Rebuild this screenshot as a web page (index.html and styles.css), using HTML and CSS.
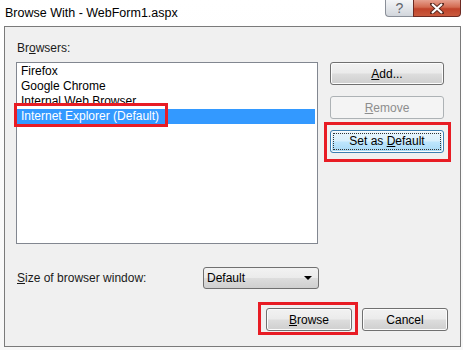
FILE: index.html
```html
<!DOCTYPE html>
<html lang="en">
<head>
    <meta charset="UTF-8">
    <title>Browse With - WebForm1.aspx</title>
    <link rel="stylesheet" href="styles.css">
</head>
<body>

<div class="window">
    <div class="titlebar">
        <span class="title">Browse With - WebForm1.aspx</span>
        <div class="caption-buttons">
            <span class="cap help">?</span>
            <span class="cap close">
                <svg width="14" height="11" viewBox="0 0 14 11">
                    <path d="M2 1 L12 10 M12 1 L2 10" stroke="#5a2a20" stroke-width="4" stroke-linecap="square"/>
                    <path d="M2 1 L12 10 M12 1 L2 10" stroke="#ffffff" stroke-width="2.2"/>
                </svg>
            </span>
        </div>
    </div>

    <div class="client">
        <div class="main">
            <div class="left">
                <div class="label">Br<u>o</u>wsers:</div>
                <div class="listbox">
                    <div class="item">Firefox</div>
                    <div class="item">Google Chrome</div>
                    <div class="item">Internal Web Browser</div>
                    <div class="item selected"><span class="marked">Internet Explorer (Default)</span></div>
                </div>
            </div>
            <div class="side">
                <button class="btn"><u>A</u>dd...</button>
                <button class="btn disabled"><u>R</u>emove</button>
                <button class="btn default marked-set"><span class="focus">Set as <u>D</u>efault</span></button>
            </div>
        </div>

        <div class="size-row">
            <span class="label"><u>S</u>ize of browser window:</span>
            <div class="select">
                <span>Default</span>
                <span class="arrow"></span>
            </div>
        </div>

        <div class="footer">
            <button class="btn wide marked-browse"><u>B</u>rowse</button>
            <button class="btn wide">Cancel</button>
        </div>
    </div>
</div>

</body>
</html>
```

FILE: styles.css
```css
* {
    box-sizing: border-box;
}

body {
    margin: 0;
    font-family: "Liberation Sans", Arial, sans-serif;
    font-size: 12px;
    color: #000;
    background: linear-gradient(to bottom, #ffffff 0%, #f7f7f7 100%);
}

.window {
    width: 463px;
    height: 350px;
    overflow: hidden;
}

/* Title bar */
.titlebar {
    height: 26px;
    display: flex;
    justify-content: space-between;
    align-items: flex-start;
    padding: 0 2px 0 5px;
}

.title {
    font-size: 12.5px;
    line-height: 16px;
    margin-top: 5px;
    color: #000;
}

.caption-buttons {
    display: flex;
}

.cap {
    height: 17px;
    display: flex;
    align-items: center;
    justify-content: center;
    border: 1px solid #8a8f98;
    border-top: none;
}

.help {
    width: 28px;
    border-radius: 0 0 0 4px;
    border-right: none;
    background: linear-gradient(to bottom, #f4f5f7 0%, #e3e6ea 50%, #d2d6dc 100%);
    color: #5f646c;
    font-size: 14px;
    line-height: 15px;
}

.close {
    width: 48px;
    border-radius: 0 0 4px 0;
    border-color: #6d2a22;
    background: linear-gradient(to bottom, #e6a08f 0%, #d36a50 45%, #c0432a 55%, #c95a3e 100%);
}

/* Client area */
.client {
    margin: 0 2px 0 4px;
    height: 321px;
    background: #f0f0f0;
    border: 1px solid #7a7a7a;
    padding: 0 12px 0 11px;
    display: flex;
    flex-direction: column;
}

.main {
    display: flex;
    margin-top: 13px;
}

.left {
    width: 302px;
}

.label {
    height: 16px;
    line-height: 16px;
    margin-left: 1px;
    color: #1a1a1a;
}

.listbox {
    margin-top: 6px;
    height: 182px;
    border: 1px solid #828790;
    background: #fff;
    padding: 1px 2px 0 0;
}

.item {
    height: 15px;
    line-height: 15px;
    padding-left: 4px;
}

.selected {
    background: #3399ff;
    color: #fff;
}

.marked {
    position: relative;
}

.marked::after {
    content: "";
    position: absolute;
    left: -7px;
    right: -9px;
    top: -6px;
    bottom: -4px;
    border: 3px solid #e81c24;
}

.side {
    display: flex;
    flex-direction: column;
    margin-left: 12px;
    margin-top: 22px;
    gap: 11px;
}

/* Buttons */
.btn {
    position: relative;
    font-family: inherit;
    font-size: 12px;
    color: #000;
    width: 114px;
    height: 23px;
    padding: 0;
    border: 1px solid #707070;
    border-radius: 3px;
    background: linear-gradient(to bottom, #f2f2f2 0%, #ebebeb 48%, #dddddd 52%, #cfcfcf 100%);
    box-shadow: inset 0 0 0 1px #fcfcfc;
}

.btn.disabled {
    color: #8d8d8d;
    border-color: #adb2b5;
    background: #f4f4f4;
    box-shadow: none;
}

.btn.default {
    border-color: #3c7fb1;
    background: linear-gradient(to bottom, #eaf6fd 0%, #d9f0fc 48%, #bee6fd 52%, #a7d9f5 100%);
    padding: 2px;
}

.focus {
    display: block;
    height: 17px;
    line-height: 15px;
    border: 1px dotted #333;
}

.marked-set::after,
.marked-browse::after {
    content: "";
    position: absolute;
    border: 3px solid #e81c24;
}

.marked-set::after {
    left: -7px;
    right: -8px;
    top: -9px;
    bottom: -10px;
}

.marked-browse::after {
    left: -9px;
    right: -7px;
    top: -7px;
    bottom: -5px;
}

/* Size row */
.size-row {
    display: flex;
    align-items: center;
    margin-top: 23px;
}

.size-row .label {
    width: 186px;
}

.select {
    width: 116px;
    height: 22px;
    border: 1px solid #707070;
    border-radius: 3px;
    background: linear-gradient(to bottom, #f2f2f2 0%, #ebebeb 48%, #dddddd 52%, #cfcfcf 100%);
    display: flex;
    align-items: center;
    justify-content: space-between;
    padding: 0 6px 0 3px;
}

.arrow {
    width: 0;
    height: 0;
    border-left: 4px solid transparent;
    border-right: 4px solid transparent;
    border-top: 4px solid #000;
}

/* Footer */
.footer {
    display: flex;
    justify-content: flex-end;
    gap: 10px;
    margin-top: 19px;
}

.btn.wide {
    width: 86px;
}
```
